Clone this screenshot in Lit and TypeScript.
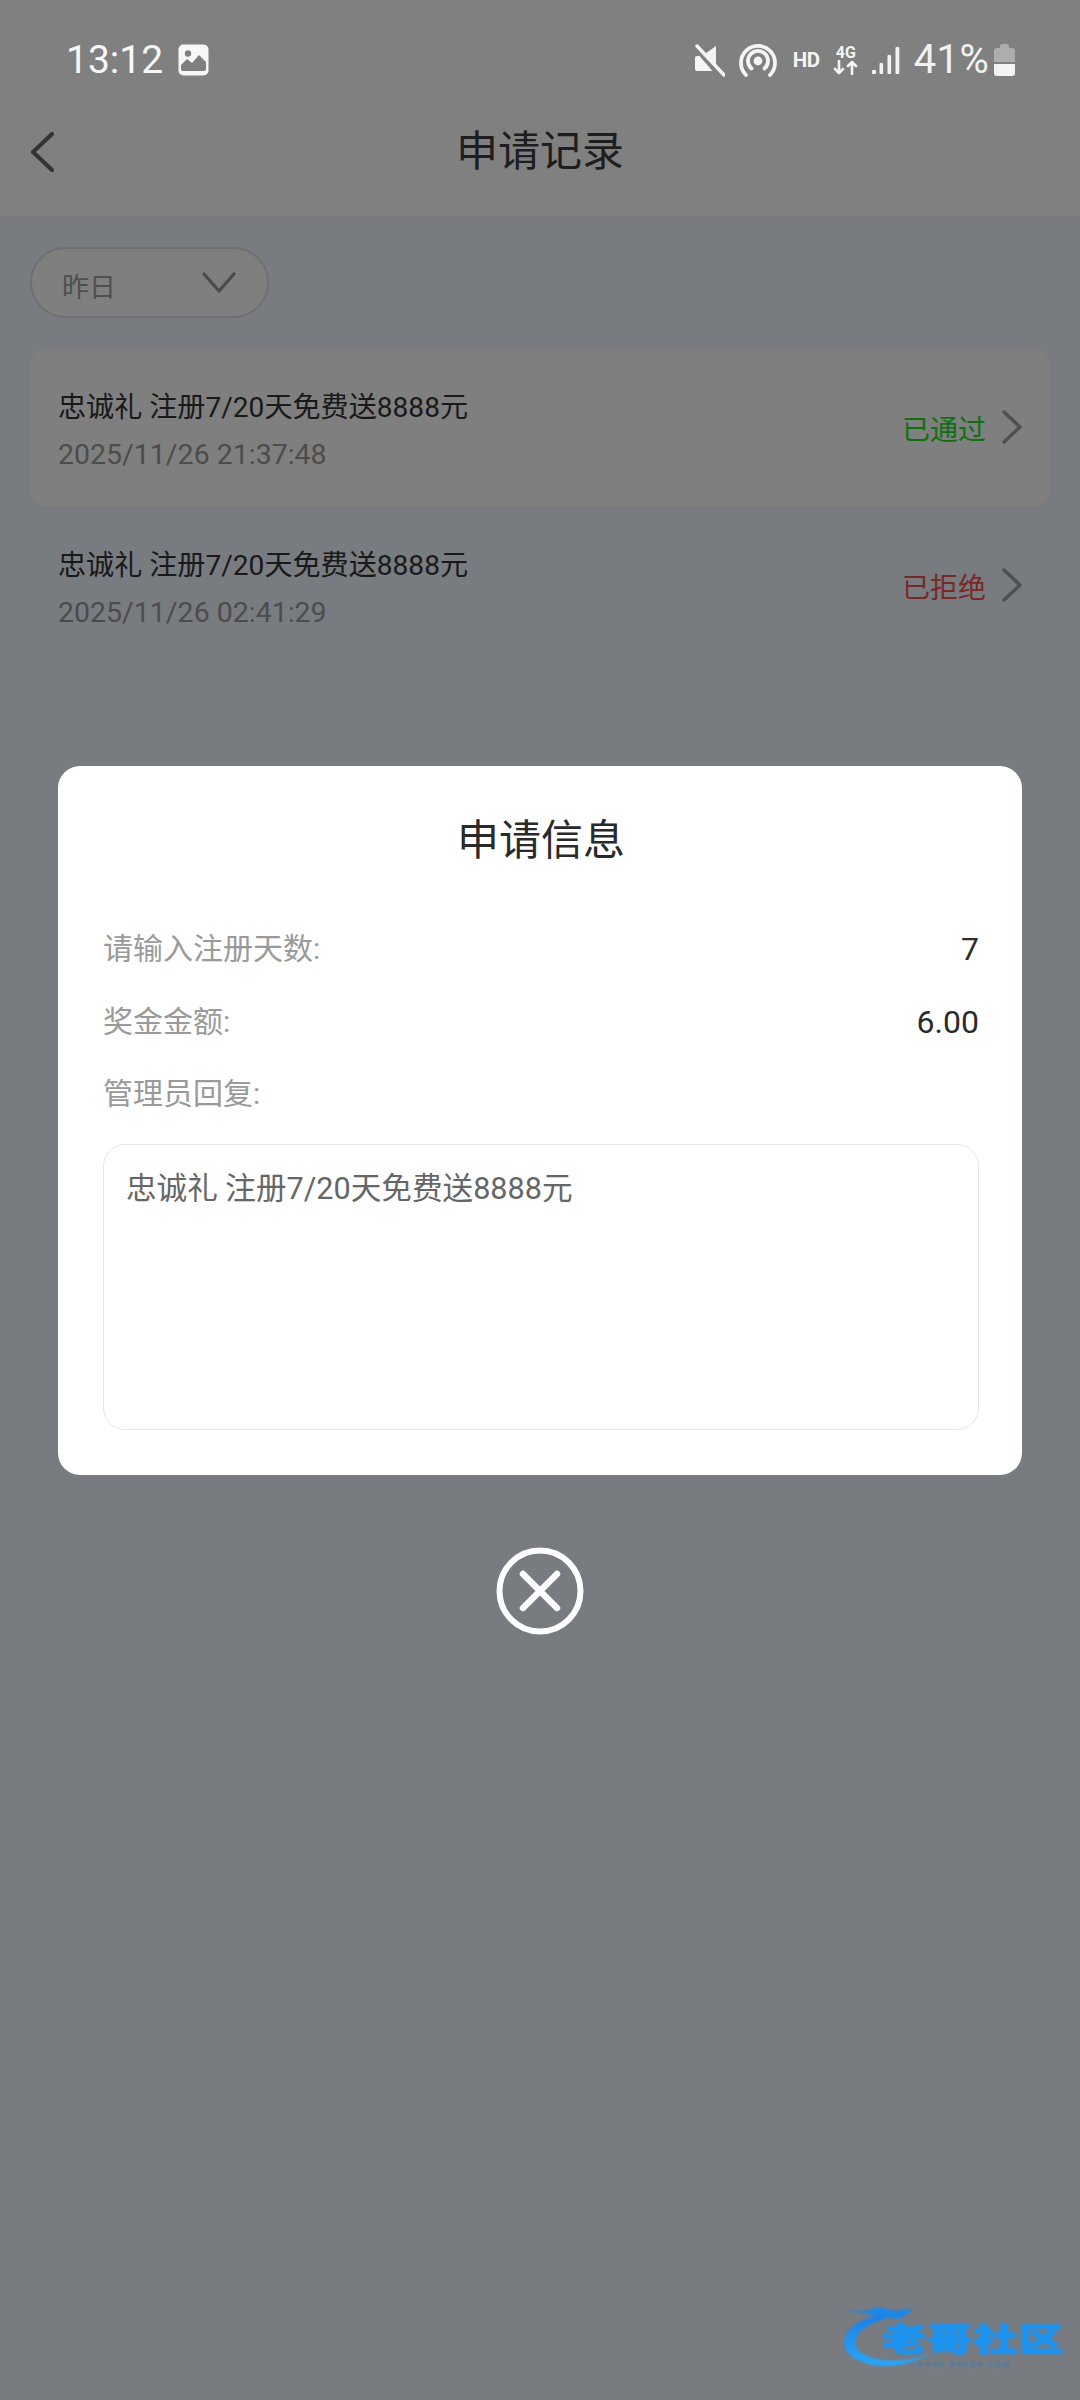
import { LitElement, html, css, svg } from "lit";
import { customElement } from "lit/decorators.js";

const chevronRight = html`<svg class="chev" viewBox="0 0 22 34" width="22" height="34"><path d="M3 2 L19 17 L3 32" fill="none" stroke="#4e4f50" stroke-width="3.4" stroke-linecap="round" stroke-linejoin="round"/></svg>`;

@customElement("app-root")
export class AppRoot extends LitElement {
  static styles = css`
    :host { display: block; width: 1080px; height: 2400px; position: relative; overflow: hidden; background: #787b80; font-family: Roboto, "Noto Sans CJK SC", sans-serif; }
    * { box-sizing: border-box; }
    .top { background: #808080; height: 217px; display: flex; flex-direction: column; border-bottom: 1px solid #7c7d80; }
    .status { height: 120px; display: flex; align-items: center; padding: 0 65px 0 66px; color: #fff; }
    .time { font-size: 39px; line-height: 1; font-weight: 400; margin-right: 15px; color: #f7f7f7; }
    .spacer { flex: 1; }
    .status-r { display: flex; align-items: center; }
    .hd { font-size: 20.5px; font-weight: 700; color: #f4f4f4; margin: 0 13px 0 16px; width: 27px; letter-spacing: -0.5px; }
    .net { display: flex; flex-direction: column; align-items: center; width: 26px; margin-right: 13px; color: #f4f4f4; }
    .net b { font-size: 16px; line-height: 15px; font-weight: 700; }
    .pct { font-size: 40px; line-height: 1; color: #f2f2f2; margin: 0 5px 0 14px; letter-spacing: 0.3px; font-weight: 400; }
    .nav { flex: 1; display: flex; align-items: center; position: relative; padding: 0 0 33px 30px; }
    .back { position: relative; top: 0; }
    .title { flex: 1; text-align: center; font-size: 42px; color: #1e1e1e; margin-right: 54px; line-height: 60px; }
    .content { padding: 30px 30px 0; }
    .pill { width: 239px; height: 71px; border: 2px solid #6e7074; border-radius: 36px; background: #7f7f7f; display: flex; align-items: center; justify-content: space-between; padding: 0 31px 0 30px; color: #4e4f50; font-size: 27px; margin-bottom: 30px; }
    .pill span { position: relative; top: 3px; }
    .rows { display: flex; flex-direction: column; }
    .row { height: 158px; border-radius: 16px; display: flex; align-items: center; justify-content: space-between; padding: 8px 27px 0 28px; }
    .row.active { background: #7f7f7f; }
    .rname { font-size: 28.1px; line-height: 40px; color: #191919; }
    .rdate { font-size: 28.5px; line-height: 40px; color: #4c4c4c; margin-top: 7px; }
    .rstat { display: flex; align-items: center; gap: 15px; font-size: 28px; position: relative; top: -3px; }
    .green { color: #107010; }
    .red { color: #762a26; }
    .chev { display: block; position: relative; top: -1px; }
    .overlay { position: absolute; inset: 0; display: flex; flex-direction: column; align-items: center; padding-top: 766px; }
    .modal { width: 964px; height: 709px; background: #fff; border-radius: 22px; padding: 0 43px 0 45px; display: flex; flex-direction: column; }
    .mtitle { text-align: center; font-size: 42px; color: #2a2a2a; line-height: 60px; margin-top: 45px; margin-bottom: 56px; }
    .field { display: flex; justify-content: space-between; font-size: 30px; line-height: 44px; height: 72.5px; color: #2b2b2b; }
    .field .lab { color: #9a9a9a; }
    .field .val { font-size: 32px; }
    .box { margin-top: -1px; height: 286px; border: 1.5px solid #e6e6e6; border-radius: 22px; padding: 22px 22px; font-size: 30.6px; line-height: 44px; color: #666; }
    .close { margin-top: 72px; display: block; }
    .mark { position: absolute; left: 842px; top: 2305px; width: 225px; height: 70px; filter: blur(1.2px); }
    .mark .txt { position: absolute; left: 40px; top: 20px; font-size: 37px; font-weight: 900; letter-spacing: 1px; line-height: 36px; white-space: nowrap; transform: scale(1.2, 0.85); transform-origin: left top; color: #1c94f2; -webkit-text-stroke: 1.2px #1c94f2; }
    .mark .sub { position: absolute; left: 70px; top: 56px; font-size: 7px; letter-spacing: 2.4px; color: #2a78c0; line-height: 8px; white-space: nowrap; }
    .mark svg { position: absolute; left: 0; top: 0; }
  `;

  private rows = [
    { date: "2025/11/26 21:37:48", st: "已通过", cls: "green", active: true },
    { date: "2025/11/26 02:41:29", st: "已拒绝", cls: "red", active: false },
  ];

  render() {
    return html`
      <div class="top">
        <div class="status">
          <span class="time">13:12</span>
          <svg width="31" height="32" viewBox="0 0 31 32">
            <rect x="0.5" y="0.5" width="30" height="31" rx="5" fill="#f7f7f7"/>
            <circle cx="10" cy="9.5" r="3.2" fill="#7f7f7f"/>
            <path d="M3 25 V21 L9 15 L14 19 L21 11 L28 18 V25 Q28 27 26 27 H5 Q3 27 3 25Z" fill="#7f7f7f"/>
          </svg>
          <div class="spacer"></div>
          <div class="status-r">
            <svg width="30" height="34" viewBox="0 0 30 34" style="margin-right:14px">
              <path d="M0 13 Q0 11 2 11 H7 L21 1 V26 L12 26 H2 Q0 26 0 24Z" fill="#f4f4f4" transform="translate(0 2)"/>
              <path d="M0 4 L26 34" stroke="#808080" stroke-width="5"/>
              <path d="M2 3 L29 32" stroke="#f4f4f4" stroke-width="3.4" stroke-linecap="round"/>
            </svg>
            <svg width="38" height="34" viewBox="0 0 38 34">
              <g fill="none" stroke="#f4f4f4" stroke-width="3.8" stroke-linecap="round">
                <path d="M7 32 A17 17 0 1 1 31 32"/>
                <path d="M12.5 25.5 A10 10 0 1 1 25.5 25.5"/>
              </g>
              <circle cx="19" cy="18" r="4.4" fill="#f4f4f4"/>
            </svg>
            <span class="hd">HD</span>
            <div class="net"><b>4G</b>
              <svg width="25" height="15" viewBox="0 0 25 15"><g fill="none" stroke="#f4f4f4" stroke-width="2.6" stroke-linecap="round" stroke-linejoin="round"><path d="M6 1 V13 M2 9 L6 13 L10 9"/><path d="M19 14 V2 M15 6 L19 2 L23 6"/></g></svg>
            </div>
            <svg width="28" height="28" viewBox="0 0 28 28" style="margin-top:2px">
              <g fill="#f4f4f4">
                <rect x="0" y="23" width="4" height="4" rx="1"/>
                <rect x="7.5" y="16" width="3.6" height="11" rx="1"/>
                <rect x="15.5" y="8" width="3.6" height="19" rx="1"/>
                <rect x="23.5" y="0" width="3.8" height="27" rx="1"/>
              </g>
            </svg>
            <span class="pct">41%</span>
            <svg width="21" height="32" viewBox="0 0 21 32">
              <path d="M6 2 Q6 0 8 0 H13 Q15 0 15 2 V4 H18 Q21 4 21 7 V18 H0 V7 Q0 4 3 4 H6Z" fill="#adadad"/>
              <path d="M0 20 H21 V29 Q21 32 18 32 H3 Q0 32 0 29Z" fill="#f4f4f4"/>
            </svg>
          </div>
        </div>
        <div class="nav">
          <svg class="back" width="24" height="40" viewBox="0 0 24 40"><path d="M22 2 L3 20 L22 38" fill="none" stroke="#333" stroke-width="4" stroke-linecap="round" stroke-linejoin="round"/></svg>
          <div class="title">申请记录</div>
        </div>
      </div>
      <div class="content">
        <div class="pill"><span>昨日</span>
          <svg width="34" height="22" viewBox="0 0 34 22"><path d="M2 2 L17 19 L32 2" fill="none" stroke="#4a4b4d" stroke-width="3.2" stroke-linecap="round" stroke-linejoin="round"/></svg>
        </div>
        <div class="rows">
          ${this.rows.map(
            (r) => html`<div class="row ${r.active ? "active" : ""}">
              <div>
                <div class="rname">忠诚礼 注册7/20天免费送8888元</div>
                <div class="rdate">${r.date}</div>
              </div>
              <div class="rstat"><span class=${r.cls}>${r.st}</span>${chevronRight}</div>
            </div>`
          )}
        </div>
      </div>
      <div class="overlay">
        <div class="modal">
          <div class="mtitle">申请信息</div>
          <div class="field"><span class="lab">请输入注册天数:</span><span class="val">7</span></div>
          <div class="field"><span class="lab">奖金金额:</span><span class="val">6.00</span></div>
          <div class="field"><span class="lab">管理员回复:</span></div>
          <div class="box">忠诚礼 注册7/20天免费送8888元</div>
        </div>
        <svg class="close" width="88" height="88" viewBox="0 0 88 88">
          <circle cx="44" cy="44" r="40.5" fill="none" stroke="#fff" stroke-width="6"/>
          <path d="M27 27 L61 61 M61 27 L27 61" stroke="#fff" stroke-width="6.5" stroke-linecap="round"/>
        </svg>
      </div>
      <div class="mark">
        <svg width="110" height="70" viewBox="0 0 110 70">
          ${svg`<defs><linearGradient id="g" x1="0" y1="0" x2="0" y2="1"><stop offset="0" stop-color="#1a80e8"/><stop offset="1" stop-color="#2aa6f8"/></linearGradient></defs>
          <path d="M40 9 C16 14 0 26 2 40 C4 58 50 74 92 46 C68 60 22 58 14 42 C10 30 22 20 44 14Z" fill="url(#g)"/>
          <path d="M1 5 L22 6 L36 2 L54 6 L70 3 L66 9 L56 14 L42 12 L26 9Z" fill="#1a88e8"/>`}
        </svg>
        <span class="txt">老哥社区</span>
        <span class="sub">LAOGE SHEQU COM</span>
      </div>
    `;
  }
}
